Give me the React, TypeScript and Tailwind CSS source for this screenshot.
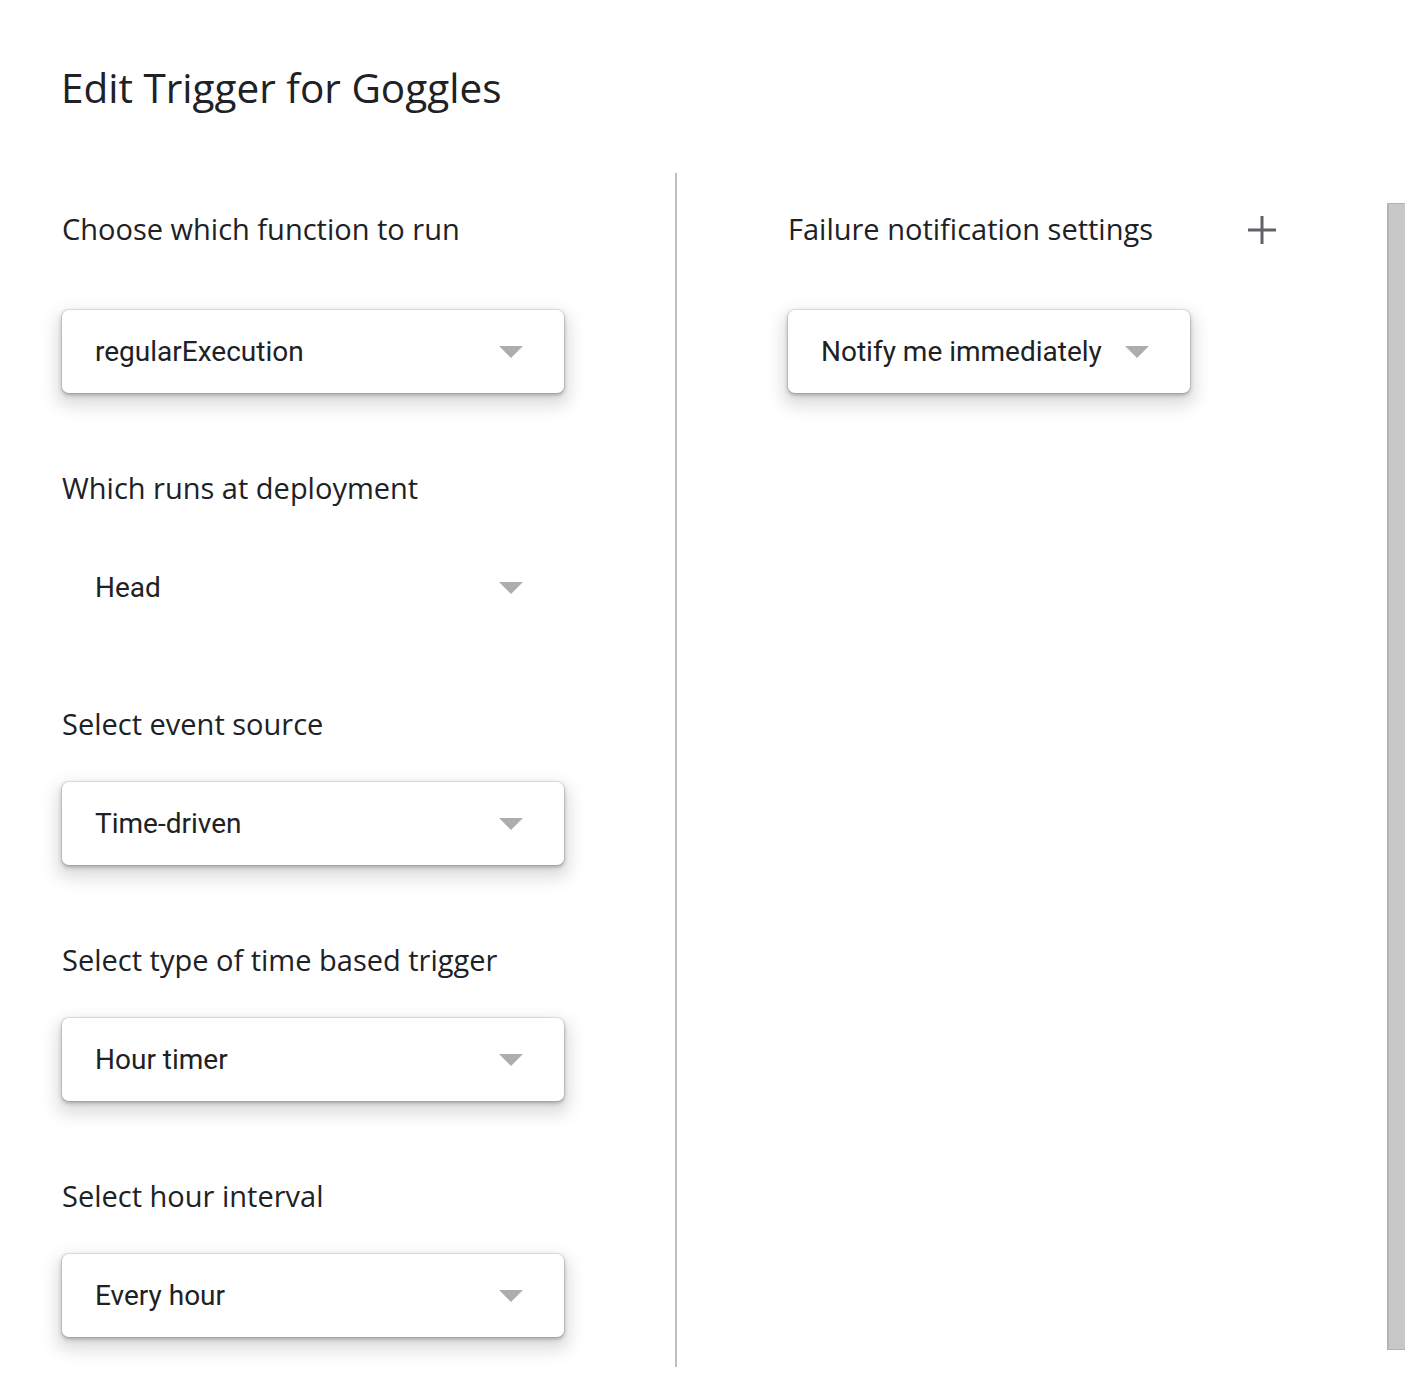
import React from "react";

const labelCls =
  "h-[40px] leading-[40px] text-[29px] text-[#202124] whitespace-nowrap [font-family:'Open_Sans',sans-serif]";

function Arrow() {
  return (
    <svg width="24" height="12" viewBox="0 0 24 12" className="shrink-0">
      <polygon points="0,0 24,0 12,12" fill="#adadad" />
    </svg>
  );
}

function Dropdown({ value, width = 502, boxed = true }: { value: string; width?: number; boxed?: boolean }) {
  return (
    <div
      className={
        "flex h-[83px] items-center justify-between rounded-[7px] pl-[33px] pr-[41px] " +
        (boxed
          ? "bg-white shadow-[0_0_0_1px_rgba(60,64,67,0.1),0_2px_4px_rgba(60,64,67,0.4),0_8px_16px_5px_rgba(60,64,67,0.18)]"
          : "")
      }
      style={{ width }}
    >
      <span className="text-[28px] text-[#202124] [font-family:Roboto,sans-serif]">{value}</span>
      <Arrow />
    </div>
  );
}

export default function App() {
  return (
    <div className="min-h-[1398px] w-[1424px] bg-white">
      <div className="pl-[61px] pt-[64px]">
        <h1 className="h-[48px] leading-[48px] text-[40.5px] text-[#202124] [font-family:'Open_Sans',sans-serif]">
          Edit Trigger for Goggles
        </h1>
      </div>
      <div className="mt-[61px] flex">
        <div className="flex w-[675px] flex-col pl-[62px]">
          <div className={labelCls + " mt-[36px]"}>Choose which function to run</div>
          <div className="mt-[61px]">
            <Dropdown value="regularExecution" />
          </div>
          <div className={labelCls + " mt-[75px]"}>Which runs at deployment</div>
          <div className="mt-[38px]">
            <Dropdown value="Head" boxed={false} />
          </div>
          <div className={labelCls + " mt-[75px]"}>Select event source</div>
          <div className="mt-[38px]">
            <Dropdown value="Time-driven" />
          </div>
          <div className={labelCls + " mt-[75px]"}>Select type of time based trigger</div>
          <div className="mt-[38px]">
            <Dropdown value="Hour timer" />
          </div>
          <div className={labelCls + " mt-[75px]"}>Select hour interval</div>
          <div className="mt-[38px]">
            <Dropdown value="Every hour" />
          </div>
          <div className="h-[30px]" />
        </div>
        <div className="w-[2px] bg-[#bdc1c6]" />
        <div className="flex flex-1 flex-col pl-[111px]">
          <div className="mt-[36px] flex h-[40px] w-[488px] items-center justify-between">
            <span className={labelCls}>Failure notification settings</span>
            <svg width="28" height="28" viewBox="0 0 28 28" className="mt-[1px]">
              <rect x="12.5" y="0" width="3" height="28" fill="#5f6368" />
              <rect x="0" y="12.5" width="28" height="3" fill="#5f6368" />
            </svg>
          </div>
          <div className="mt-[61px]">
            <Dropdown value="Notify me immediately" width={402} />
          </div>
        </div>
        <div className="mr-[19px] mt-[30px] h-[1147px] w-[18px] border-l-2 border-t border-b border-[#b3b3b3] bg-[#c8c8c8]" />
      </div>
    </div>
  );
}
